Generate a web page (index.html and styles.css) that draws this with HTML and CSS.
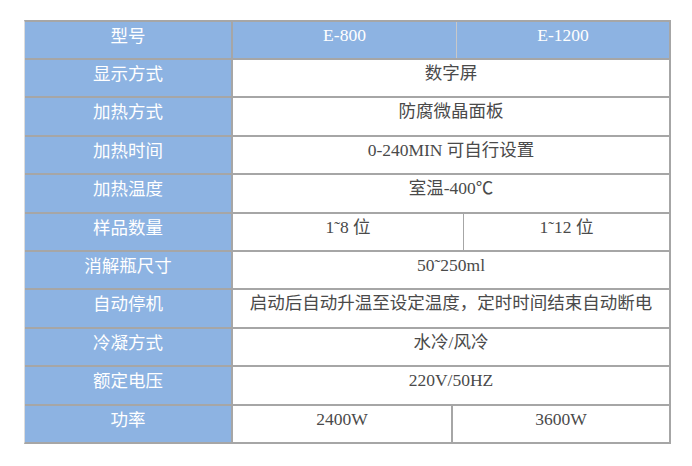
FILE: index.html
```html
<!DOCTYPE html>
<html lang="zh">
<head>
<meta charset="utf-8">
<title>参数表</title>
<link rel="stylesheet" href="styles.css">
</head>
<body>
<div class="spec">
  <div class="row head">
    <div class="lbl">型号</div>
    <div class="val w-h1">E-800</div>
    <div class="val w-h2">E-1200</div>
  </div>
  <div class="row"><div class="lbl">显示方式</div><div class="val full">数字屏</div></div>
  <div class="row"><div class="lbl">加热方式</div><div class="val full">防腐微晶面板</div></div>
  <div class="row"><div class="lbl">加热时间</div><div class="val full">0-240MIN 可自行设置</div></div>
  <div class="row"><div class="lbl">加热温度</div><div class="val full">室温-400℃</div></div>
  <div class="row"><div class="lbl">样品数量</div><div class="val w-s1">1˜8 位</div><div class="val w-s2">1˜12 位</div></div>
  <div class="row"><div class="lbl">消解瓶尺寸</div><div class="val full">50˜250ml</div></div>
  <div class="row"><div class="lbl">自动停机</div><div class="val full">启动后自动升温至设定温度，定时时间结束自动断电</div></div>
  <div class="row"><div class="lbl">冷凝方式</div><div class="val full">水冷/风冷</div></div>
  <div class="row"><div class="lbl">额定电压</div><div class="val full">220V/50HZ</div></div>
  <div class="row"><div class="lbl">功率</div><div class="val w-p1">2400W</div><div class="val w-p2">3600W</div></div>
</div>
</body>
</html>
```
FILE: styles.css
```css
html, body {
  margin: 0;
  padding: 0;
  background: #ffffff;
}
body {
  padding: 20px 0 0 24px;
}
.spec {
  width: 644px;
  border-top: 2px solid #a6a6a6;
  border-left: 1px solid #dcdcdc;
  border-right: 2px solid #a6a6a6;
  border-bottom: 2px solid #a6a6a6;
  background: #ffffff;
}
.row {
  display: flex;
  height: 36.4px;
  border-top: 2px solid #a6a6a6;
  box-shadow: inset 0 1px 0 #ffffff;
}
.row.head {
  border-top: none;
  height: 36px;
}
.lbl, .val {
  box-sizing: border-box;
  text-align: center;
  font-size: 17.5px;
  line-height: 24px;
  padding-top: 1px;
  white-space: nowrap;
}
.lbl {
  width: 208px;
  background: #8db3e2;
  color: #ffffff;
  font-family: "Noto Sans CJK SC", sans-serif;
  border-right: 2px solid #a6a6a6;
}
.val {
  color: #4a4a4a;
  font-family: "Liberation Serif", "Noto Sans CJK SC", serif;
}
.head .val {
  background: #8db3e2;
  color: #ffffff;
}
.full { flex: 1; }
.w-h1 { width: 224px; border-right: 1px solid #c8c8c8; box-shadow: 1px 0 0 #fff; }
.w-h2 { flex: 1; }
.w-s1 { width: 231px; border-right: 1px solid #a6a6a6; }
.w-s2 { flex: 1; }
.w-p1 { width: 220px; border-right: 2px solid #a6a6a6; }
.w-p2 { flex: 1; }
```
